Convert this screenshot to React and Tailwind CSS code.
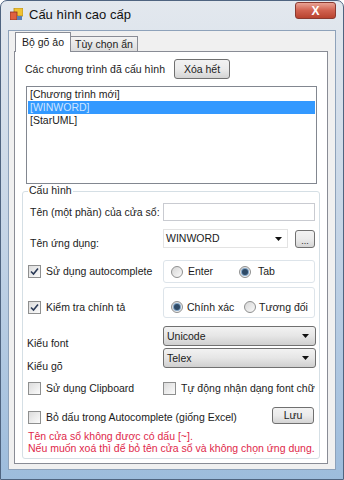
import React from 'react';

function Check({ checked }) {
  return (
    <span className="flex h-[13px] w-[13px] shrink-0 items-center justify-center border border-[#8e8f8f] bg-gradient-to-br from-[#dcdcdc] to-[#fbfbfb]">
      {checked ? (
        <svg width="9" height="9" viewBox="0 0 9 9" aria-hidden>
          <path d="M1 4.5 L3.5 7 L8 1.5" fill="none" stroke="#2a3a57" strokeWidth="1.6" />
        </svg>
      ) : null}
    </span>
  );
}

function Radio({ checked }) {
  return (
    <span className="flex h-[12px] w-[12px] shrink-0 items-center justify-center rounded-full border border-[#8e8f8f] bg-gradient-to-br from-[#d6d6d6] to-[#fafafa]">
      {checked ? <span className="h-[6px] w-[6px] rounded-full bg-[#2e4a66] ring-1 ring-[#7fa3c6]" /> : null}
    </span>
  );
}

function Arrow() {
  return (
    <svg width="7" height="4" viewBox="0 0 7 4" aria-hidden>
      <path d="M0 0 H7 L3.5 4 Z" fill="#111" />
    </svg>
  );
}

function GrayCombo({ value }) {
  return (
    <div className="flex h-[20px] w-[153px] items-center justify-between rounded-[3px] border border-[#707070] bg-gradient-to-b from-[#f2f2f2] via-[#e6e6e6] to-[#cfcfcf] pl-[3px] pr-[6px]">
      <span>{value}</span>
      <Arrow />
    </div>
  );
}

function WinButton({ children, className }) {
  return (
    <div
      className={`flex items-center justify-center rounded-[3px] border border-[#707070] bg-gradient-to-b from-[#f2f2f2] via-[#ebebeb] to-[#d4d4d4] ${className}`}
    >
      {children}
    </div>
  );
}

export default function App() {
  return (
    <div className="flex h-[480px] w-[344px] flex-col overflow-hidden whitespace-nowrap rounded-t-[7px] border border-[#4f6480] bg-gradient-to-b from-[#e3e8ee] via-[#c4d4e6] to-[#9dbcdc] font-['Liberation_Sans',Arial,sans-serif] text-[10.5px] leading-[13px] text-[#1b1b1b]">
      {/* title bar */}
      <div className="flex h-[29px] shrink-0 items-start">
        <div className="mt-[7px] ml-[9px] h-[12px] w-[13px]">
          <svg width="13" height="12" viewBox="0 0 13 12" aria-hidden>
            <rect x="4" y="0" width="9" height="8" fill="#f1c232" stroke="#b08a1a" strokeWidth="0.8" />
            <rect x="0" y="4" width="7" height="8" fill="#e06040" stroke="#8a3020" strokeWidth="0.8" />
            <rect x="7" y="8" width="5" height="4" fill="#5a7fb5" />
          </svg>
        </div>
        <div className="mt-[6px] ml-[6px] text-[13px] leading-[15px] text-[#111]">Cấu hình cao cấp</div>
        <div className="ml-auto mt-[1px] mr-[7px] flex h-[17px] w-[41px] items-center justify-center rounded-[3px] border border-[#8a3a30] bg-gradient-to-b from-[#e8a294] via-[#d0614f] to-[#b8432f]">
          <span className="text-[12px] font-bold leading-none text-white">X</span>
        </div>
      </div>

      {/* client area */}
      <div className="mx-[7px] h-[440px] shrink-0 border border-[#8ea2ba] bg-[#f0f0f0]">
        {/* tabs */}
        <div className="relative z-10 flex h-[20px] items-end pl-[6px]">
          <div className="-mb-px flex h-[20px] w-[56px] items-center justify-center border border-b-0 border-[#898c95] bg-white">
            Bộ gõ ảo
          </div>
          <div className="flex h-[15px] w-[67px] items-center justify-center border border-l-0 border-b-0 border-[#898c95] bg-gradient-to-b from-[#f3f3f3] to-[#dcdcdc]">
            Tùy chọn ẩn
          </div>
        </div>

        {/* tab page */}
        <div className="ml-[5px] h-[413px] w-[314px] border border-[#898c95] bg-white">
          <div className="mt-[7px] flex h-[20px] items-center pl-[10px]">
            <span className="w-[149px]">Các chương trình đã cấu hình</span>
            <WinButton className="h-[20px] w-[56px]">Xóa hết</WinButton>
          </div>

          <div className="mt-[7px] ml-[11px] h-[98px] w-[291px] border border-[#828790] p-px">
            <div className="h-[13px] pl-[2px] leading-[13px]">[Chương trình mới]</div>
            <div className="h-[13px] bg-[#3399ff] pl-[2px] leading-[13px] text-[#cfe6ff]">[WINWORD]</div>
            <div className="h-[13px] pl-[2px] leading-[13px]">[StarUML]</div>
          </div>

          <div className="relative mt-[7px] ml-[7px] h-[268px] w-[298px] rounded-[3px] border border-[#d5dfe5]">
            <span className="absolute -top-[8px] left-[5px] bg-white px-px">Cấu hình</span>

            <div className="mt-[11px] flex h-[18px] items-center">
              <span className="w-[140px] pl-[7px]">Tên (một phần) của cửa sổ:</span>
              <div className="h-[18px] w-[152px] border border-[#c9cbd1] bg-white" />
            </div>

            <div className="mt-[8px] flex h-[19px] items-end">
              <span className="w-[140px] translate-y-[2px] pl-[7px]">Tên ứng dụng:</span>
              <div className="flex h-[19px] w-[125px] items-center justify-between border border-[#e3e3e3] bg-white pl-[2px] pr-[5px]">
                <span>WINWORD</span>
                <Arrow />
              </div>
              <WinButton className="ml-[7px] h-[18px] w-[20px] self-center border-[#9a9a9a] text-[9px] leading-none">
                <span className="mt-[6px]">...</span>
              </WinButton>
            </div>

            <div className="mt-[12px] flex h-[23px] items-center">
              <div className="flex w-[140px] items-center gap-[5px] pl-[5px]">
                <Check checked />
                <span>Sử dụng autocomplete</span>
              </div>
              <div className="flex h-[23px] w-[152px] items-center rounded-[3px] border border-[#dde4ea] pl-[7px]">
                <Radio />
                <span className="ml-[5px] w-[51px]">Enter</span>
                <Radio checked />
                <span className="ml-[7px]">Tab</span>
              </div>
            </div>

            <div className="mt-[4px] flex h-[31px] items-center">
              <div className="flex w-[140px] items-center gap-[5px] pl-[5px] pt-[9px]">
                <Check checked />
                <span>Kiểm tra chính tả</span>
              </div>
              <div className="flex h-[31px] w-[152px] items-center rounded-[3px] border border-[#dde4ea] pl-[7px] pt-[9px]">
                <Radio checked />
                <span className="ml-[4px] w-[57px]">Chính xác</span>
                <Radio />
                <span className="ml-[3px]">Tương đối</span>
              </div>
            </div>

            <div className="mt-[8px] flex h-[20px] items-end">
              <span className="w-[140px] translate-y-[4px] pl-[4px]">Kiểu font</span>
              <GrayCombo value="Unicode" />
            </div>

            <div className="mt-[2px] flex h-[20px] items-end">
              <span className="w-[140px] translate-y-[5px] pl-[4px]">Kiểu gõ</span>
              <GrayCombo value="Telex" />
            </div>

            <div className="mt-[14px] flex h-[13px] items-center">
              <div className="flex w-[140px] items-center gap-[5px] pl-[5px]">
                <Check />
                <span>Sử dụng Clipboard</span>
              </div>
              <div className="flex items-center gap-[5px]">
                <Check />
                <span>Tự động nhận dạng font chữ</span>
              </div>
            </div>

            <div className="mt-[12px] flex h-[17px] items-center">
              <div className="flex w-[249px] items-center gap-[5px] pl-[5px] pt-[3px]">
                <Check />
                <span>Bỏ dấu trong Autocomplete (giống Excel)</span>
              </div>
              <WinButton className="h-[17px] w-[42px]">Lưu</WinButton>
            </div>

            <div className="mt-[6px] pl-[5px] leading-[12px] text-[#e0284a]">
              <div>Tên cửa sổ không được có dấu [~].</div>
              <div>Nếu muốn xoá thì để bỏ tên cửa sổ và không chọn ứng dụng.</div>
            </div>
          </div>
        </div>
      </div>
    </div>
  );
}
